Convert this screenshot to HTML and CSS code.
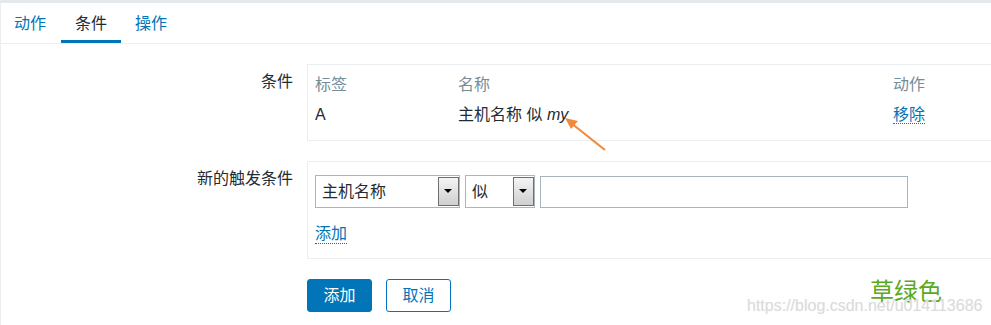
FILE: index.html
```html
<!DOCTYPE html>
<html lang="zh-CN">
  <head>
    <meta charset="UTF-8" />
    <meta name="viewport" content="width=device-width, initial-scale=1.0" />
    <title>动作 - 条件</title>
    <link rel="stylesheet" href="styles.css">
  </head>
  <body>
    <div class="top-band"></div>

    <div class="page">
      <ul class="tabs">
        <li class="tab">动作</li>
        <li class="tab active">条件</li>
        <li class="tab">操作</li>
      </ul>

      <div class="form">
        <div class="form-row">
          <label class="form-label">条件</label>
          <div class="form-field">
            <div class="panel condition-panel">
              <table class="condition-table">
                <thead>
                  <tr>
                    <th class="col-tag">标签</th>
                    <th class="col-name">名称</th>
                    <th>动作</th>
                  </tr>
                </thead>
                <tbody>
                  <tr>
                    <td>A</td>
                    <td>主机名称 似 <em>my</em></td>
                    <td><a class="link" href="#">移除</a></td>
                  </tr>
                </tbody>
              </table>
            </div>
          </div>
        </div>

        <div class="form-row">
          <label class="form-label">新的触发条件</label>
          <div class="form-field">
            <div class="panel new-panel">
              <div class="inputs">
                <div class="select select-type">
                  <span class="select-text">主机名称</span>
                  <span class="select-btn"></span>
                </div>
                <div class="select select-op">
                  <span class="select-text">似</span>
                  <span class="select-btn"></span>
                </div>
                <input class="text-input" type="text" />
              </div>
              <a class="link add-link" href="#">添加</a>
            </div>
          </div>
        </div>

        <div class="form-row buttons-row">
          <div></div>
          <div class="buttons">
            <button class="btn btn-primary">添加</button>
            <button class="btn btn-alt">取消</button>
          </div>
        </div>
      </div>
    </div>

    <!-- annotation drawn over the screenshot -->
    <svg class="arrow" width="60" height="50" viewBox="0 0 60 50">
      <line x1="44" y1="37" x2="10" y2="10" stroke="#f08a3c" stroke-width="2.2" />
      <polygon points="4,5 17,8 10,16" fill="#f08a3c" />
    </svg>

    <div class="note">草绿色</div>
    <div class="watermark">https://blog.csdn.net/u014113686</div>
  </body>
</html>
```

FILE: styles.css
```css
html {
  overflow: hidden;
}

body {
  margin: 0;
  background: #fff;
  color: #1f2c33;
  font-family: "Liberation Sans", "Noto Sans CJK SC", sans-serif;
  font-size: 16px;
  line-height: 20px;
  position: relative;
  height: 325px;
}

.top-band {
  height: 3px;
  background: #e6e9ec;
}

.page {
  border-left: 1px solid #ebeef0;
  min-height: 322px;
}

/* tabs */
.tabs {
  list-style: none;
  margin: 0;
  padding: 0;
  display: flex;
  border-bottom: 1px solid #ebeef0;
  height: 40px;
}

.tab {
  padding: 11px 14px 7px;
  color: #0275b8;
  border-bottom: 3px solid transparent;
}

.tab:first-child {
  padding-left: 13px;
  padding-right: 15px;
}

.tab.active {
  color: #1f2c33;
  border-bottom-color: #0275b8;
}

/* form */
.form {
  padding-top: 20px;
}

.form-row {
  display: grid;
  grid-template-columns: 292px 700px;
  column-gap: 14px;
  margin-bottom: 20px;
}

.form-label {
  text-align: right;
  padding-top: 8px;
}

.panel {
  border: 1px solid #ebeef0;
  border-right: none;
}

.condition-panel {
  padding: 5px 7px 10px;
}

.condition-table {
  border-collapse: collapse;
}

.condition-table th,
.condition-table td {
  padding: 0;
  height: 30px;
  text-align: left;
  font-weight: normal;
  white-space: nowrap;
}

.condition-table th {
  color: #768d99;
}

.col-tag {
  width: 143px;
}

.col-name {
  width: 435px;
}

.link {
  color: #0275b8;
  text-decoration: none;
  border-bottom: 1px dotted #0275b8;
}

/* new condition */
.new-panel {
  padding: 13px 7px 14px;
}

.inputs {
  display: flex;
  align-items: center;
  margin-bottom: 16px;
}

.select {
  display: flex;
  height: 31px;
  border: 1px solid #a9b6bd;
  margin-right: 5px;
}

.select-type {
  width: 143px;
}

.select-op {
  width: 68px;
  margin-right: 5px;
}

.select-text {
  flex: 1;
  padding-left: 6px;
  line-height: 31px;
}

.select-btn {
  width: 19px;
  margin: 1px 0;
  border: 1px solid #6f6f6f;
  background: linear-gradient(#f4f4f4, #cfcfcf);
  position: relative;
}

.select-btn::after {
  content: "";
  position: absolute;
  left: 5px;
  top: 11px;
  border-left: 4px solid transparent;
  border-right: 4px solid transparent;
  border-top: 4px solid #000;
}

.text-input {
  width: 368px;
  height: 32px;
  border: 1px solid #a9b6bd;
  padding: 0 5px;
  box-sizing: border-box;
  margin: 0;
  font: inherit;
}

.add-link {
  display: inline-block;
  line-height: 19px;
}

/* buttons */
.buttons {
  display: flex;
  gap: 14px;
}

.btn {
  width: 65px;
  height: 33px;
  border-radius: 3px;
  font: inherit;
  cursor: pointer;
  padding: 0;
}

.btn-primary {
  background: #0275b8;
  border: 1px solid #0275b8;
  color: #fff;
}

.btn-alt {
  background: #fff;
  border: 1px solid #0275b8;
  color: #0275b8;
}

/* overlays */
.arrow {
  position: absolute;
  left: 561px;
  top: 113px;
}

.note {
  position: absolute;
  left: 870px;
  top: 275px;
  font-size: 24px;
  line-height: 30px;
  color: #5aaa1e;
  font-family: "Noto Sans CJK SC", sans-serif;
}

.watermark {
  position: absolute;
  left: 747px;
  top: 296px;
  font-size: 16px;
  color: #dcdcdc;
  text-shadow: 0 0 1px #eee;
}
```
